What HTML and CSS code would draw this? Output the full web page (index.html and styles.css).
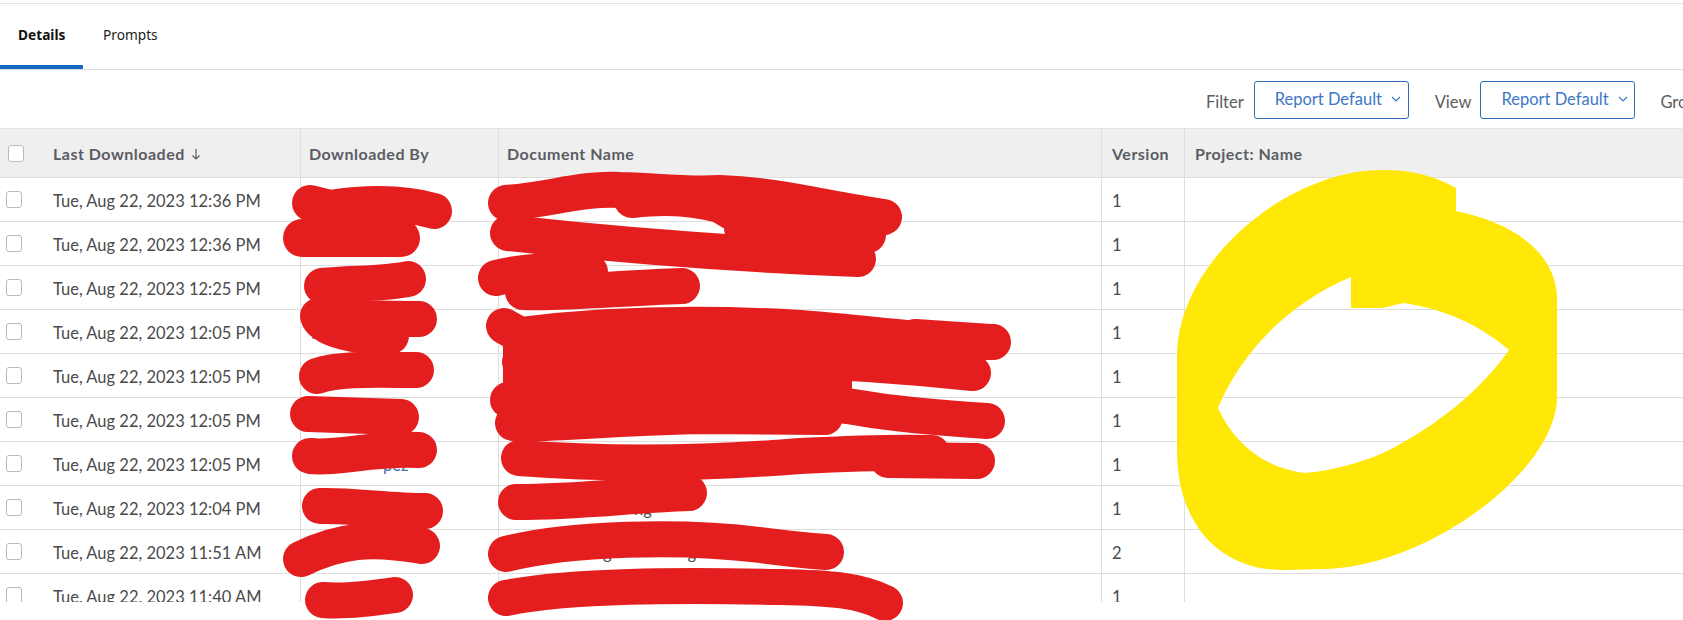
FILE: index.html
```html
<!DOCTYPE html>
<html lang="en">
<head>
<meta charset="utf-8">
<title>Details</title>
<link rel="stylesheet" href="styles.css">
</head>
<body>
<div class="page">
  <nav class="tabs">
    <a class="tab active">Details</a>
    <a class="tab">Prompts</a>
  </nav>
  <div class="toolbar">
    <span class="label">Filter</span>
    <button class="select"><span>Report Default</span><svg class="chev" viewBox="0 0 10 6"><path d="M1 1l4 4 4-4"/></svg></button>
    <span class="label view">View</span>
    <button class="select"><span>Report Default</span><svg class="chev" viewBox="0 0 10 6"><path d="M1 1l4 4 4-4"/></svg></button>
    <span class="label group">Group By</span>
  </div>
  <div class="grid-wrap">
    <table class="grid">
      <colgroup>
        <col class="c-check"><col class="c-date"><col class="c-by"><col class="c-doc"><col class="c-ver"><col>
      </colgroup>
      <thead>
        <tr>
          <th class="check"><span class="box head-box"></span></th>
          <th class="date">Last Downloaded <svg class="arrow" viewBox="0 0 10 12"><path d="M5 1v10M1.5 7.5L5 11l3.5-3.5"/></svg></th>
          <th class="tight">Downloaded By</th>
          <th class="tight">Document Name</th>
          <th>Version</th>
          <th>Project: Name</th>
        </tr>
      </thead>
      <tbody>
        <tr><td class="check"><span class="box"></span></td><td class="date">Tue, Aug 22, 2023 12:36 PM</td><td></td><td></td><td>1</td><td></td></tr>
        <tr><td class="check"><span class="box"></span></td><td class="date">Tue, Aug 22, 2023 12:36 PM</td><td></td><td></td><td>1</td><td></td></tr>
        <tr><td class="check"><span class="box"></span></td><td class="date">Tue, Aug 22, 2023 12:25 PM</td><td></td><td></td><td>1</td><td></td></tr>
        <tr><td class="check"><span class="box"></span></td><td class="date">Tue, Aug 22, 2023 12:05 PM</td><td class="link">K</td><td></td><td>1</td><td></td></tr>
        <tr><td class="check"><span class="box"></span></td><td class="date">Tue, Aug 22, 2023 12:05 PM</td><td></td><td></td><td>1</td><td></td></tr>
        <tr><td class="check"><span class="box"></span></td><td class="date">Tue, Aug 22, 2023 12:05 PM</td><td></td><td></td><td>1</td><td></td></tr>
        <tr><td class="check"><span class="box"></span></td><td class="date">Tue, Aug 22, 2023 12:05 PM</td><td class="link"><span class="peek-by">pez</span></td><td></td><td>1</td><td></td></tr>
        <tr><td class="check"><span class="box"></span></td><td class="date">Tue, Aug 22, 2023 12:04 PM</td><td></td><td><span class="peek-doc-a">ng</span></td><td>1</td><td></td></tr>
        <tr><td class="check"><span class="box"></span></td><td class="date">Tue, Aug 22, 2023 11:51 AM</td><td></td><td><span class="peek-doc-b">g</span><span class="peek-doc-c">g</span></td><td>2</td><td></td></tr>
        <tr><td class="check"><span class="box"></span></td><td class="date">Tue, Aug 22, 2023 11:40 AM</td><td></td><td></td><td>1</td><td></td></tr>
      </tbody>
    </table>
  </div>
  <svg class="scribble" viewBox="0 0 1683 620" aria-hidden="true">
    <path class="yellow" fill-rule="evenodd" d="M1456 188 C1432 174 1405 170 1385 170 C1290 168 1177 260 1177 357 L1177 450 C1177 525 1220 570 1283 570 L1327 569 C1430 565 1557 470 1557 397 L1557 297 C1555 250 1510 222 1456 211 Z M1351 277 L1351 308 L1383 308 L1403 303 C1445 309 1480 325 1509 350 C1483 387 1440 425 1383 453 C1360 463 1330 471 1305 473 C1265 468 1235 445 1218 408 C1240 355 1285 305 1351 277 Z"/>
    <g class="red">
      <path d="M310 203L330 208C350 205 395 200 434 211"/>
      <path class="w38" d="M302 238L401 238"/>
      <path d="M322 286C350 283 385 284 408 279"/>
      <path d="M419 319C380 319 350 318 318 316C322 330 360 338 391 336"/>
      <path d="M317 376C340 368 380 370 416 370"/>
      <path d="M308 414L401 417"/>
      <path d="M310 456C340 459 370 448 419 450"/>
      <path d="M320 506C350 505 390 511 425 511"/>
      <path d="M301 559C340 540 370 537 422 546"/>
      <path d="M323 600C345 602 375 598 395 595"/>

      <path d="M506 203C550 200 580 188 620 190C650 190 680 195 720 193C780 195 830 210 884 217"/>
      <path d="M632 200C650 198 680 195 720 205L745 220L870 225"/>
      <path d="M508 233C590 242 700 253 858 259"/>
      <path d="M742 228L868 235"/>
      <path d="M496 278C520 272 545 270 590 272"/>
      <path d="M523 292C560 294 620 288 682 286"/>
      <path d="M504 326L520 335C600 325 700 322 800 328C860 332 920 342 993 342"/>
      <path d="M915 337L990 342"/>
      <path d="M520 362C650 355 800 355 973 373"/>
      <path d="M508 400C650 400 780 395 860 408C900 415 940 418 987 421"/>
      <path d="M513 423C560 425 600 418 700 416L825 417"/>
      <path d="M519 458C600 464 700 464 800 456C860 453 900 452 932 453"/>
      <path d="M888 460L977 461"/>
      <path d="M516 502C580 502 630 495 689 493"/>
      <path d="M506 554C570 538 680 535 760 545Q800 550 826 552"/>
      <path d="M506 598C570 585 680 585 780 587C830 588 860 590 885 603"/>
      <rect class="fill" x="503" y="335" width="349" height="82"/>
    </g>
  </svg>
</div>
</body>
</html>
```
FILE: styles.css
```css
* { box-sizing: border-box; }
html, body { margin: 0; height: 100%; background: #fff; }
body { overflow: hidden; font-family: "Lato", "Liberation Sans", sans-serif; color: #4a4a4a; }
.page { position: relative; width: 1683px; height: 620px; padding-top: 3px; overflow: hidden; }

.tabs { display: flex; height: 67px; border-top: 1px solid #e3e3e3; border-bottom: 1px solid #dedede; }
.tab { display: flex; align-items: center; padding: 0 18px 4px; height: 65px; font-family: "Noto Sans", sans-serif; font-size: 13.7px; color: #1e1e1e; }
.tab.active { width: 83px; font-weight: 700; color: #111; border-bottom: 4px solid #1768c4; padding-top: 0; padding-bottom: 0; }
.tab:not(.active) { padding-left: 20px; }

.toolbar { display: flex; align-items: center; justify-content: flex-end; height: 58px; padding-top: 2px; }
.label { flex: none; font-size: 16.5px; color: #5c5c5c; margin-right: 10px; padding-top: 3px; }
.label.view { margin-left: 26px; margin-right: 9px; }
.label.group { margin-left: 25px; margin-right: -46px; }
.select { flex: none; display: flex; align-items: center; gap: 9px; width: 155px; height: 38px; padding: 0 0 3px 20px; background: #fff; border: 1px solid #2b6fb8; border-radius: 3px; font: inherit; font-size: 16.5px; color: #3d78c6; }
.chev { width: 10px; height: 6px; fill: none; stroke: #3d78c6; stroke-width: 1.2; }

.grid-wrap { height: 474px; overflow: hidden; border-top: 1px solid #e3e3e3; }
.grid { width: 100%; table-layout: fixed; border-collapse: separate; border-spacing: 0; font-size: 16.5px; }
.c-check { width: 45px; }
.c-date { width: 255px; }
.c-by { width: 198px; }
.c-doc { width: 603px; }
.c-ver { width: 83px; }
th, td { padding: 1px 0 0 10px; text-align: left; border-bottom: 1px solid #dedede; border-left: 1px solid #dedede; white-space: nowrap; }
th { height: 49px; background: #efefef; font-weight: 700; font-size: 16px; letter-spacing: .5px; color: #5b5c64; }
th.tight { padding-left: 8px; }
td { height: 44px; padding-top: 3px; color: #4a4a4a; }
td.link { color: #4a6ea8; }
th.check, td.check, th.date, td.date { border-left: 0; }
th.check, td.check { padding: 0; }
th.date, td.date { padding-left: 8px; }
td.date { padding-top: 3px; }
.box { display: block; width: 16px; height: 17px; margin-left: 6px; background: #fff; border: 1px solid #b9b9b9; border-radius: 3px; }
.head-box { margin-left: 8px; }
.arrow { width: 10px; height: 12px; fill: none; stroke: #5b5c64; stroke-width: 1.2; margin-left: 2px; }
.peek-by { margin-left: 72px; }
.peek-doc-a { margin-left: 125px; }
.peek-doc-b { margin-left: 94px; }
.peek-doc-c { margin-left: 76px; }

.scribble { position: absolute; top: 0; left: 0; width: 1683px; height: 620px; }
.yellow { fill: #ffe600; opacity: .97; }
.red path { fill: none; stroke: #e41e1e; stroke-width: 36; stroke-linecap: round; stroke-linejoin: round; }
.red .w38 { stroke-width: 38; }
.red .fill { fill: #e41e1e; }
```
